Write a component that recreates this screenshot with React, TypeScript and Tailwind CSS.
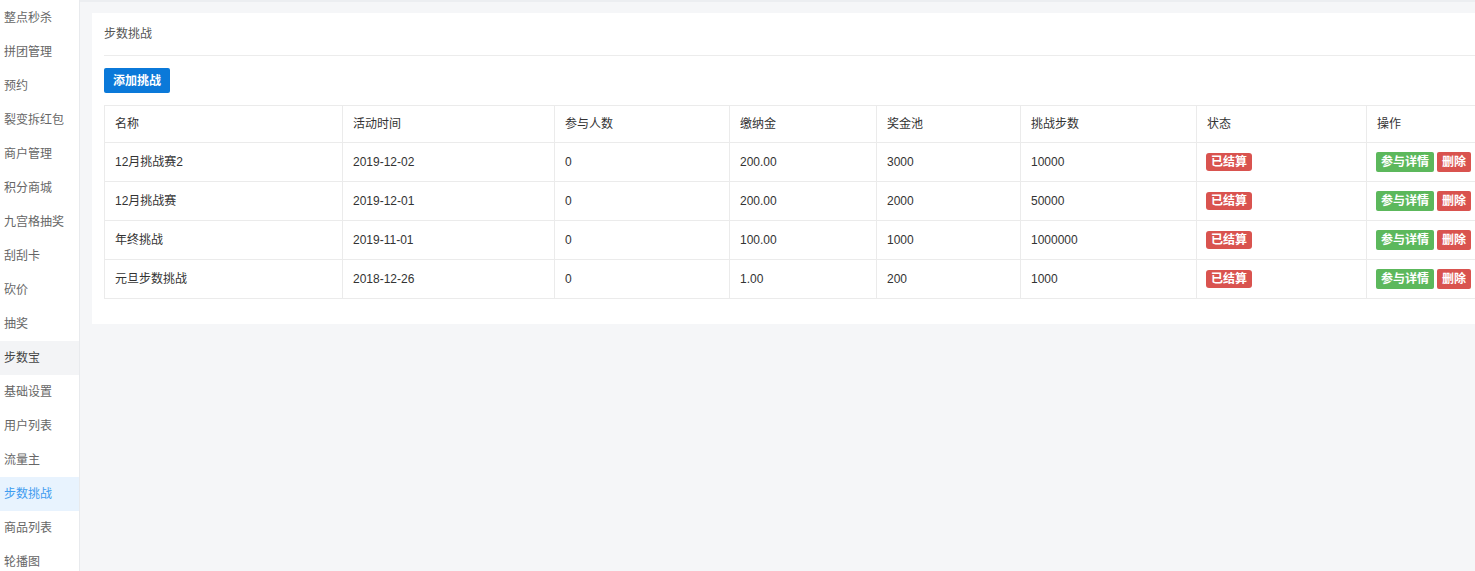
import React from "react";

const sideItems = [
  "整点秒杀",
  "拼团管理",
  "预约",
  "裂变拆红包",
  "商户管理",
  "积分商城",
  "九宫格抽奖",
  "刮刮卡",
  "砍价",
  "抽奖",
  "步数宝",
  "基础设置",
  "用户列表",
  "流量主",
  "步数挑战",
  "商品列表",
  "轮播图",
];

const cols = [
  { name: "名称", w: "w-[238px]" },
  { name: "活动时间", w: "w-[212px]" },
  { name: "参与人数", w: "w-[175px]" },
  { name: "缴纳金", w: "w-[147px]" },
  { name: "奖金池", w: "w-[144px]" },
  { name: "挑战步数", w: "w-[176px]" },
  { name: "状态", w: "w-[170px]" },
  { name: "操作", w: "w-[120px]" },
];

const rows = [
  ["12月挑战赛2", "2019-12-02", "0", "200.00", "3000", "10000"],
  ["12月挑战赛", "2019-12-01", "0", "200.00", "2000", "50000"],
  ["年终挑战", "2019-11-01", "0", "100.00", "1000", "1000000"],
  ["元旦步数挑战", "2018-12-26", "0", "1.00", "200", "1000"],
];

export default function App() {
  return (
    <div
      className="flex w-[1475px] h-[571px] overflow-hidden bg-[#f5f6f8] text-[12px]"
      style={{ fontFamily: '"Liberation Sans", "Noto Sans CJK SC", sans-serif' }}
    >
      <aside className="w-[80px] shrink-0 bg-white border-r border-[#e8eaed] flex flex-col pt-[1px]">
        {sideItems.map((s) => {
          const group = s === "步数宝";
          const active = s === "步数挑战";
          return (
            <div
              key={s}
              className={`h-[34px] shrink-0 flex items-center pl-[4px] whitespace-nowrap ${
                group
                  ? "bg-[#f3f4f6] text-[#444]"
                  : active
                  ? "bg-[#e8f3fe] text-[#3f9cf0]"
                  : "text-[#666]"
              }`}
            >
              {s}
            </div>
          );
        })}
      </aside>
      <main className="flex-1 min-w-0 border-t-2 border-[#eceef1] pt-[11px] pl-[12px]">
        <div className="w-[1410px] bg-white px-[12px] pb-[25px]">
          <div className="h-[43px] flex items-center border-b border-[#ececec] text-[#555]">
            步数挑战
          </div>
          <button className="mt-[12px] h-[25px] px-[9px] bg-[#0b79d9] text-white font-bold rounded-[2px] text-[12px]">
            添加挑战
          </button>
          <table className="mt-[12px] border-collapse table-fixed text-[#333]">
            <thead>
              <tr className="h-[37px]">
                {cols.map((c) => (
                  <th
                    key={c.name}
                    className={`${c.w} border border-[#ebebeb] text-left font-normal px-[10px]`}
                  >
                    {c.name}
                  </th>
                ))}
              </tr>
            </thead>
            <tbody>
              {rows.map((r) => (
                <tr key={r[0]} className="h-[39px]">
                  {r.map((v, i) => (
                    <td key={i} className="border border-[#ebebeb] px-[10px]">
                      {v}
                    </td>
                  ))}
                  <td className="border border-[#ebebeb] pl-[9px] pr-[10px]">
                    <span className="inline-flex items-center h-[18px] px-[5px] rounded-[3px] bg-[#d9534f] text-white font-bold">
                      已结算
                    </span>
                  </td>
                  <td className="border border-[#ebebeb] pl-[9px] pr-[10px] whitespace-nowrap">
                    <span className="inline-flex items-center h-[20px] px-[5px] rounded-[2px] bg-[#5cb85c] text-white font-bold">
                      参与详情
                    </span>
                    <span className="inline-flex items-center h-[20px] px-[5px] ml-[3px] rounded-[2px] bg-[#d9534f] text-white font-bold">
                      删除
                    </span>
                  </td>
                </tr>
              ))}
            </tbody>
          </table>
        </div>
      </main>
    </div>
  );
}
